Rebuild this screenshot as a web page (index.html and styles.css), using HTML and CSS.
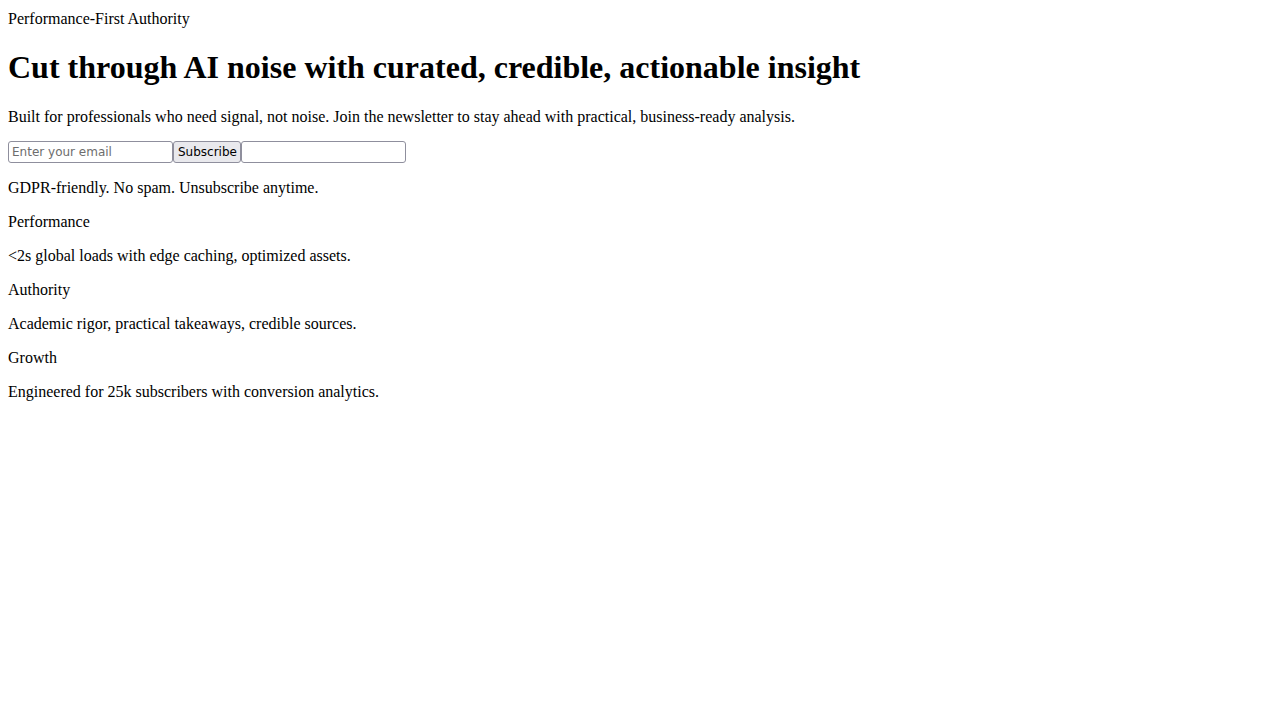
FILE: index.html
```html
<!DOCTYPE html>
<html lang="en">
<head>
<meta charset="utf-8">
<title>Performance-First Authority</title>
<link rel="stylesheet" href="styles.css">
</head>
<body>
<div class="eyebrow">Performance-First Authority</div>
<h1 class="headline">Cut through AI noise with curated, credible, actionable insight</h1>
<p class="lede">Built for professionals who need signal, not noise. Join the newsletter to stay ahead with practical, business-ready analysis.</p>
<form class="signup"><input type="email" class="field" placeholder="Enter your email"><button type="submit" class="btn">Subscribe</button><input type="text" class="field" aria-hidden="true"></form>
<p class="note">GDPR-friendly. No spam. Unsubscribe anytime.</p>
<div class="features">
<p class="feature-title">Performance</p>
<p class="feature-text">&lt;2s global loads with edge caching, optimized assets.</p>
<p class="feature-title">Authority</p>
<p class="feature-text">Academic rigor, practical takeaways, credible sources.</p>
<p class="feature-title">Growth</p>
<p class="feature-text">Engineered for 25k subscribers with conversion analytics.</p>
</div>
</body>
</html>
```
FILE: styles.css
```css
body {
  font-family: "Liberation Serif", serif;
  padding-top: 2px;
}
.signup {
  margin: -1px 0 0;
  display: flex;
  height: 22px;
}
.field, .btn {
  box-sizing: border-box;
  height: 22px;
  margin: 0;
  border: 1px solid #8f8f9d;
  border-radius: 3px;
  font-family: "DejaVu Sans", sans-serif;
  font-size: 12px;
  color: #000;
}
.field {
  width: 165px;
  padding: 1px 3px;
  background: #fff;
}
.field::placeholder {
  color: #6d6d6d;
}
.btn {
  width: 68px;
  padding: 0 4px;
  background: #e9e9ed;
}
```
